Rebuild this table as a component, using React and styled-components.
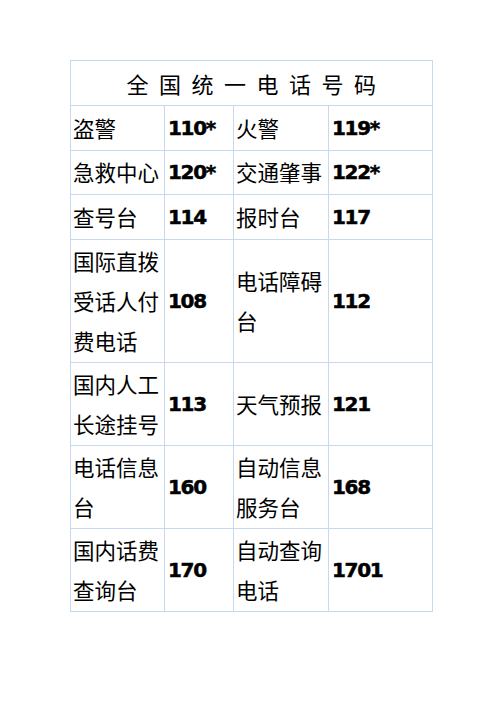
import React from "react";
import styled, { createGlobalStyle } from "styled-components";

const Global = createGlobalStyle`
  html, body { margin: 0; padding: 0; background: #fff; }
  body { width: 496px; height: 702px; overflow: hidden; }
`;

const Page = styled.div`
  padding: 60px 0 0 70px;
`;

const Table = styled.table`
  border-collapse: collapse;
  table-layout: fixed;
  width: 362px;
  font-family: "Noto Sans CJK SC", "Noto Sans", sans-serif;
  color: #000;
`;

const Col = styled.col`
  width: ${(p) => p.$w}px;
`;

const Row = styled.tr`
  height: 44.6px;
`;

const TitleCell = styled.th`
  border: 1px solid #c6d9f0;
  height: 44px;
  padding: 0;
  font-weight: 400;
  font-size: 22px;
  letter-spacing: 10.5px;
  text-indent: 10px;
  text-align: center;
  vertical-align: middle;
`;

const Name = styled.td`
  border: 1px solid #c6d9f0;
  padding: 1px 0 1px 2px;
  font-size: 21.5px;
  line-height: 40px;
  vertical-align: middle;
  word-break: break-all;
`;

const Num = styled.td`
  border: 1px solid #c6d9f0;
  padding: 0 0 0 3px;
  font-family: "DejaVu Sans", sans-serif;
  font-weight: 700;
  font-size: 20px;
  letter-spacing: -1.3px;
  -webkit-text-stroke: 0.5px #000;
  vertical-align: middle;
`;

const rows = [
  ["盗警", "110*", "火警", "119*"],
  ["急救中心", "120*", "交通肇事", "122*"],
  ["查号台", "114", "报时台", "117"],
  ["国际直拨受话人付费电话", "108", "电话障碍台", "112"],
  ["国内人工长途挂号", "113", "天气预报", "121"],
  ["电话信息台", "160", "自动信息服务台", "168"],
  ["国内话费查询台", "170", "自动查询电话", "1701"],
];

export default function App() {
  return (
    <Page>
      <Global />
      <Table>
        <colgroup>
          <Col $w={94} />
          <Col $w={69} />
          <Col $w={95} />
          <Col $w={104} />
        </colgroup>
        <thead>
          <tr>
            <TitleCell colSpan={4}>全国统一电话号码</TitleCell>
          </tr>
        </thead>
        <tbody>
          {rows.map((r, i) => (
            <Row key={i}>
              <Name>{r[0]}</Name>
              <Num>{r[1]}</Num>
              <Name>{r[2]}</Name>
              <Num>{r[3]}</Num>
            </Row>
          ))}
        </tbody>
      </Table>
    </Page>
  );
}
